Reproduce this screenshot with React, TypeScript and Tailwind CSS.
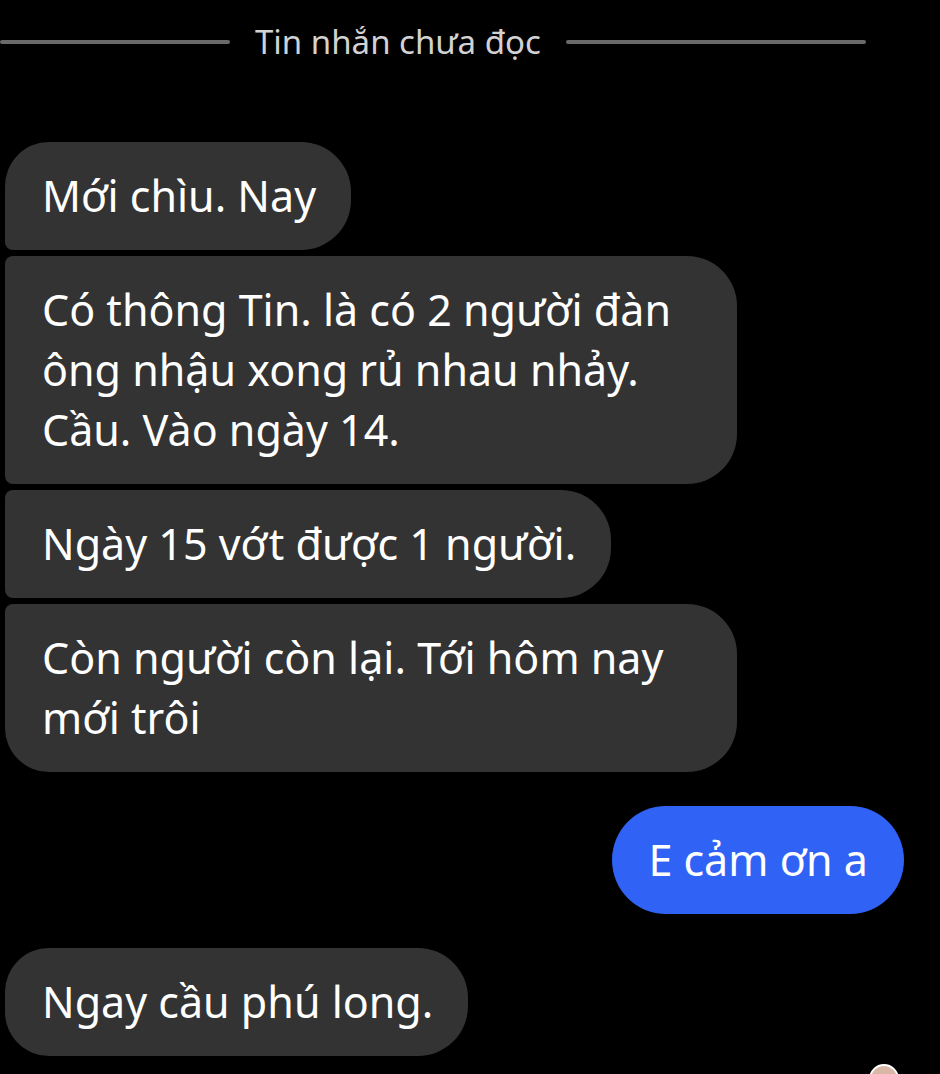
const FONT = "font-['Noto_Sans','Roboto',sans-serif]";

type Pos = "first" | "middle" | "last" | "single";

const incoming: { text: string; pos: Pos }[] = [
  { text: "Mới chìu. Nay", pos: "first" },
  { text: "Có thông Tin. là có 2 người đàn ông nhậu xong rủ nhau nhảy. Cầu. Vào ngày 14.", pos: "middle" },
  { text: "Ngày 15 vớt được 1 người.", pos: "middle" },
  { text: "Còn người còn lại. Tới hôm nay mới trôi", pos: "last" },
];

function cornerClass(pos: Pos) {
  if (pos === "first") return "rounded-tl-[44px] rounded-bl-[8px]";
  if (pos === "middle") return "rounded-tl-[8px] rounded-bl-[8px]";
  if (pos === "last") return "rounded-tl-[8px] rounded-bl-[44px]";
  return "rounded-tl-[44px] rounded-bl-[44px]";
}

function Bubble({ text, pos }: { text: string; pos: Pos }) {
  return (
    <div
      className={`max-w-[732px] self-start bg-[#333333] text-white text-[43px] leading-[60px] pl-[37px] pr-[35px] py-6 rounded-r-[50px] ${cornerClass(pos)}`}
    >
      {text}
    </div>
  );
}

export default function App() {
  return (
    <div className={`relative h-[1074px] w-[940px] overflow-hidden bg-black ${FONT}`}>
      <div className="flex items-center h-[84px]">
        <div className="h-1 w-[230px] rounded-full bg-[#6a6a6a]" />
        <span className="px-[25px] text-[33px] text-[#d2d2d2]">Tin nhắn chưa đọc</span>
        <div className="h-1 w-[300px] rounded-full bg-[#6a6a6a]" />
      </div>

      <div className="flex flex-col gap-[6px] pl-[5px] mt-[58px]">
        {incoming.map((m, i) => (
          <Bubble key={i} text={m.text} pos={m.pos} />
        ))}
      </div>

      <div className="flex justify-end pr-[36px] mt-[34px]">
        <div className="bg-[#3063f5] text-white text-[43px] leading-[60px] px-[36px] py-6 rounded-[54px]">
          E cảm ơn a
        </div>
      </div>

      <div className="flex pl-[5px] mt-[34px]">
        <Bubble text="Ngay cầu phú long." pos="single" />
      </div>

      <div className="absolute left-[869px] top-[1064px] h-[30px] w-[30px] rounded-full border-2 border-white bg-[#d9b7a6]" />
    </div>
  );
}
